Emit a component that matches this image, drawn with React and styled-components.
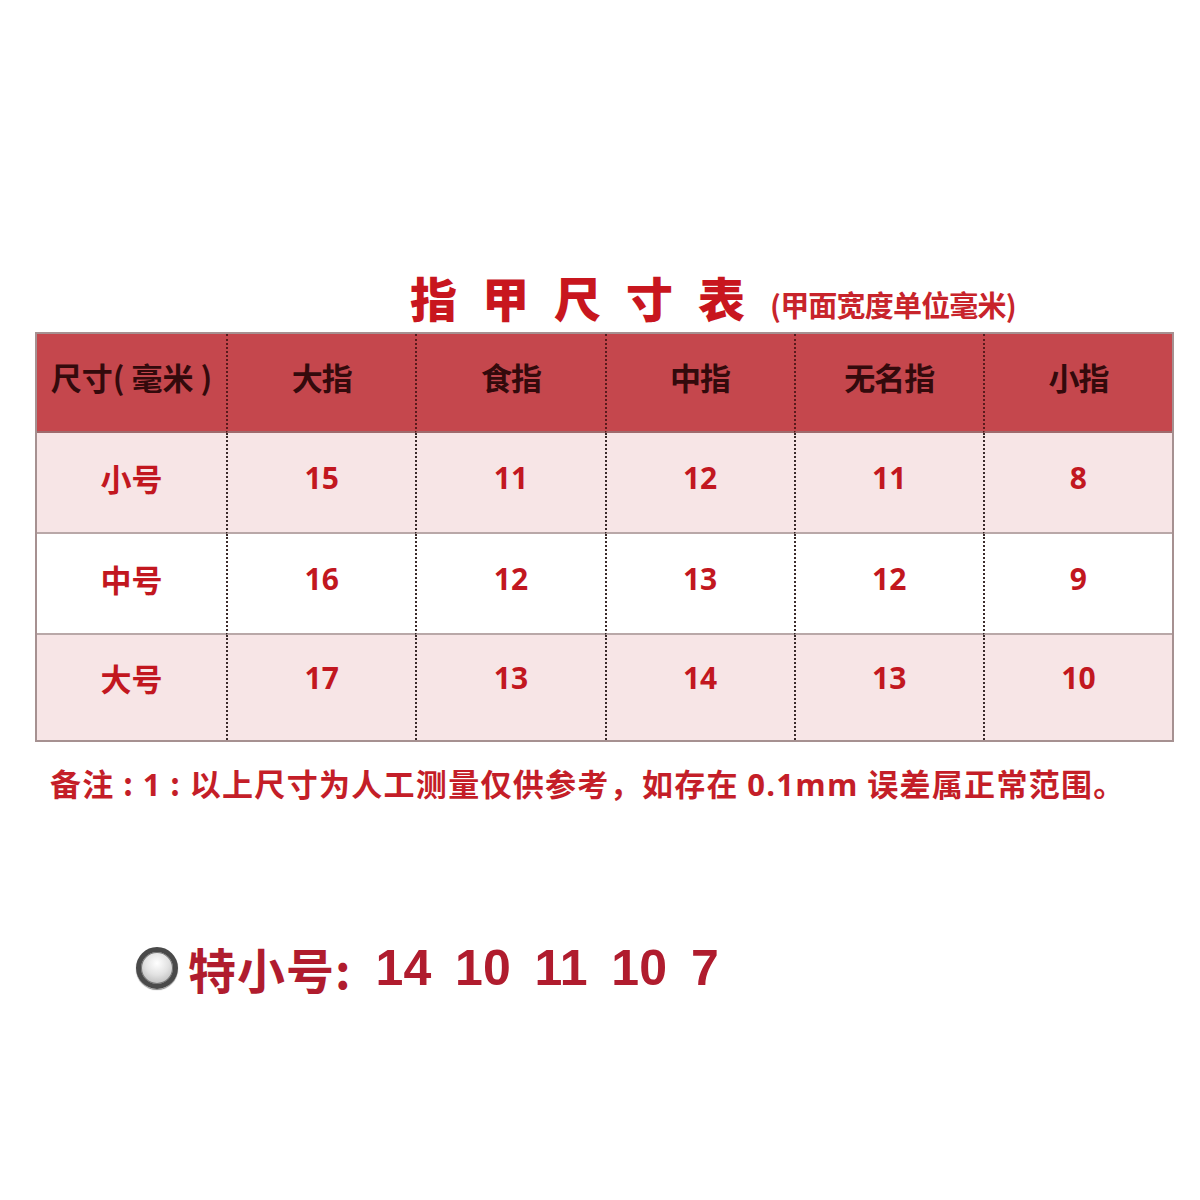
import React from "react";
import styled, { createGlobalStyle } from "styled-components";

const Global = createGlobalStyle`
  html, body { margin: 0; padding: 0; background: #fff; }
  body { font-family: "Noto Sans CJK SC", "Noto Sans", sans-serif; }
`;

const Page = styled.div`
  width: 1200px;
  height: 1200px;
  box-sizing: border-box;
  padding-top: 266px;
  background: #fff;
`;

const TitleRow = styled.div`
  display: flex;
  align-items: baseline;
  padding-left: 410px;
  height: 66px;
`;

const Title = styled.h1`
  margin: 0;
  font-size: 47px;
  font-weight: 900;
  color: #c8161e;
  letter-spacing: 25px;
  line-height: 62px;
`;

const Sub = styled.span`
  font-size: 29px;
  font-weight: 700;
  color: #c8242b;
  letter-spacing: -0.8px;
`;

const Table = styled.div`
  margin-left: 35px;
  width: 1139px;
  border: 2px solid #a69191;
  box-sizing: border-box;
  display: grid;
  grid-template-columns: repeat(6, 1fr);
  grid-template-rows: 99px 101px 101px 105px;
`;

const HeadCell = styled.div`
  background: #c5474d;
  display: flex;
  align-items: center;
  justify-content: center;
  font-size: 31px;
  font-weight: 700;
  color: #330a0c;
  border-left: ${(p) => (p.first ? "none" : "2px dotted #5a1a1c")};
  border-bottom: 2px solid #9e6a6c;
  padding-bottom: 12px;
  box-sizing: border-box;
  letter-spacing: ${(p) => (p.first ? "0px" : "-1px")};
  white-space: pre;
`;

const Cell = styled.div`
  background: ${(p) => (p.alt ? "#f7e5e6" : "#fff")};
  display: flex;
  align-items: center;
  justify-content: center;
  font-family: ${(p) =>
    p.label ? '"Noto Sans CJK SC", sans-serif' : '"Open Sans", "Noto Sans", sans-serif'};
  font-size: ${(p) => (p.label ? "31px" : "30px")};
  font-weight: 700;
  color: #c2171f;
  border-left: ${(p) => (p.first ? "none" : "2px dotted #3a2a2a")};
  border-bottom: ${(p) => (p.last ? "none" : "2px solid #b9a8a8")};
  padding-bottom: ${(p) => (p.last ? "20px" : "10px")};
  box-sizing: border-box;
`;

const Note = styled.p`
  margin: 20px 0 0 50px;
  font-size: 31px;
  font-weight: 700;
  color: #c41e28;
  letter-spacing: 1.3px;
  line-height: 42px;
  white-space: pre;
`;

const Num = styled.span`
  font-family: "Open Sans", "Noto Sans", sans-serif;
  font-weight: 700;
`;

const Extra = styled.div`
  display: flex;
  align-items: center;
  margin: 138px 0 0 136px;
`;

const Dot = styled.span`
  width: 42px;
  height: 42px;
  box-sizing: border-box;
  border-radius: 50%;
  border: 5px solid #4a4a4a;
  background: radial-gradient(circle at 50% 35%, #ffffff 0%, #e2e2e2 45%, #a8a8a8 100%);
  box-shadow: inset 0 0 0 1px #777, 0 1px 1px #888;
  flex: none;
  margin-right: 10px;
`;

const ExtraText = styled.span`
  font-size: 48px;
  font-weight: 700;
  color: #b01c2e;
  line-height: 1;
  letter-spacing: 1px;
`;

const ExtraNums = styled.span`
  font-family: "Liberation Sans", Arial, sans-serif;
  font-size: 50px;
  font-weight: 700;
  color: #b01c2e;
  word-spacing: 10px;
  margin-left: 24px;
  line-height: 1;
`;

const heads = ["尺寸( 毫米 )", "大指", "食指", "中指", "无名指", "小指"];
const rows = [
  ["小号", "15", "11", "12", "11", "8"],
  ["中号", "16", "12", "13", "12", "9"],
  ["大号", "17", "13", "14", "13", "10"],
];

export default function App() {
  return (
    <Page>
      <Global />
      <TitleRow>
        <Title>指甲尺寸表</Title>
        <Sub>(甲面宽度单位毫米)</Sub>
      </TitleRow>
      <Table>
        {heads.map((h, i) => (
          <HeadCell key={h} first={i === 0}>
            {h}
          </HeadCell>
        ))}
        {rows.map((r, ri) =>
          r.map((c, ci) => (
            <Cell
              key={ri + "-" + ci}
              alt={ri !== 1}
              first={ci === 0}
              label={ci === 0}
              last={ri === rows.length - 1}
            >
              {c}
            </Cell>
          ))
        )}
      </Table>
      <Note>
        备注 : <Num>1</Num> : 以上尺寸为人工测量仅供参考，如存在 <Num>0.1mm</Num> 误差属正常范围。
      </Note>
      <Extra>
        <Dot />
        <ExtraText>特小号:</ExtraText>
        <ExtraNums>14 10 11 10 7</ExtraNums>
      </Extra>
    </Page>
  );
}
